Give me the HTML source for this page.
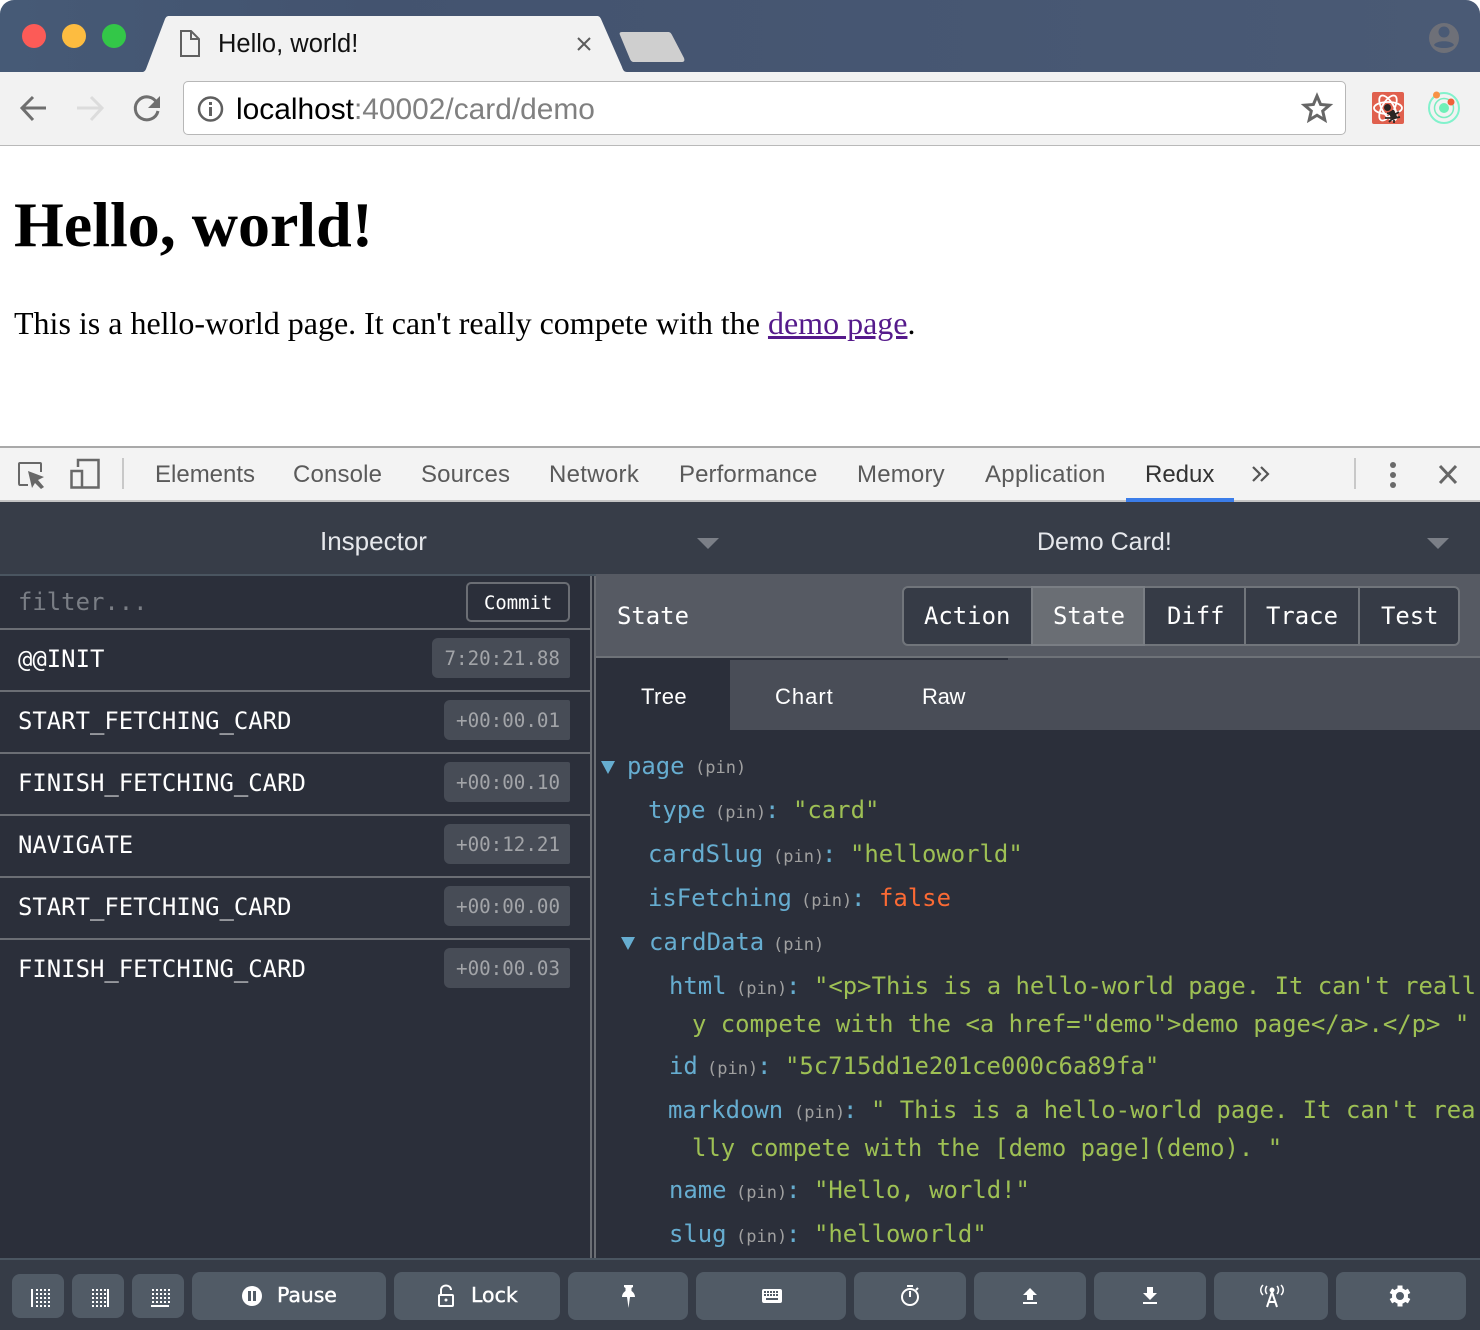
<!DOCTYPE html>
<html><head><meta charset="utf-8"><title>Hello, world!</title>
<style>
html,body{margin:0;padding:0;background:#fff}
#r{position:relative;width:1480px;height:1330px;overflow:hidden;font-family:"Liberation Sans",sans-serif}
.a{position:absolute}
.t{position:absolute;white-space:nowrap;line-height:40px;height:40px}
.m{font-family:"DejaVu Sans Mono","Liberation Mono",monospace;font-size:23.92px}
.dt{font-size:24px;color:#5a5a5a;top:455px;letter-spacing:.15px}
.row{color:#fff;left:18px}
.bd{position:absolute;height:40px;line-height:42px;background:#474c56;border-radius:6px 2px 2px 6px;color:#a2a4a8;font-family:"DejaVu Sans Mono",monospace;font-size:19.2px;text-align:right;padding-right:10px;box-sizing:border-box;width:auto;right:910px}
.ln{position:absolute;left:0;width:590px;height:2px;background:#6b6e74}
.k{color:#66add0}.p{color:#a0a0a0}.s{color:#9ec054}.f{color:#fb6a34}
.b{position:absolute;background:#515b66;border-radius:8px}
.seg{top:596px;color:#fff}
.tb{font-size:22px;color:#fff;top:677px;letter-spacing:.7px}
.fb{font-family:"DejaVu Sans",sans-serif;font-size:20.5px;color:#fff;top:1275px;-webkit-text-stroke:.4px #fff}
.pn{font-size:17px}
</style></head><body><div id="r">
<!-- chrome -->
<div class="a" style="left:0;top:0;width:1480px;height:72px;background:linear-gradient(90deg,#465a76,#43536f 25%,#4a5a75);border-radius:14px 14px 0 0"></div>
<div class="a" style="left:0;top:72px;width:1480px;height:73px;background:#f2f2f2"></div>
<div class="a" style="left:0;top:145px;width:1480px;height:1px;background:#b9b9b9"></div>
<div class="a" style="left:183px;top:81px;width:1161px;height:52px;background:#fff;border:1px solid #b7b7b7;border-radius:5px"></div>
<span class="t" style="left:236px;top:90px;font-size:29.9px;color:#000">localhost<span style="color:#808080">:40002/card/demo</span></span>
<!-- page -->
<div class="a" style="left:14px;top:187px;font:bold 64px/76px 'Liberation Serif',serif;color:#000;white-space:nowrap">Hello, world!</div>
<div class="a" style="left:14px;top:303px;font:32px/40px 'Liberation Serif',serif;color:#000;white-space:nowrap">This is a hello-world page. It can't really compete with the <span style="color:#551a8b;text-decoration:underline">demo page</span>.</div>
<!-- devtools bar -->
<div class="a" style="left:0;top:446px;width:1480px;height:2px;background:#a9a9a9"></div>
<div class="a" style="left:0;top:448px;width:1480px;height:52px;background:#f3f3f3"></div>
<div class="a" style="left:0;top:500px;width:1480px;height:2px;background:#c4c4c4"></div>
<div class="a" style="left:1126px;top:498px;width:108px;height:4px;background:#3b7de9"></div>
<span class="t dt" style="left:155px;letter-spacing:0">Elements</span>
<span class="t dt" style="left:293px">Console</span>
<span class="t dt" style="left:421px">Sources</span>
<span class="t dt" style="left:549px;letter-spacing:.3px">Network</span>
<span class="t dt" style="left:679px;letter-spacing:.1px">Performance</span>
<span class="t dt" style="left:857px;letter-spacing:.2px">Memory</span>
<span class="t dt" style="left:985px;letter-spacing:.3px">Application</span>
<span class="t dt" style="left:1145px;color:#333;letter-spacing:0">Redux</span>
<!-- redux top -->
<div class="a" style="left:0;top:502px;width:1480px;height:72px;background:#373d48"></div>
<div class="a" style="left:0;top:574px;width:596px;height:2px;background:#4a5560"></div>
<span class="t" style="left:320px;top:521px;font-size:26px;color:#e6e8ec">Inspector</span>
<span class="t" style="left:1037px;top:522px;font-size:25px;color:#e6e8ec">Demo Card!</span>
<!-- main -->
<div class="a" style="left:0;top:576px;width:1480px;height:682px;background:#2b2f3a"></div>
<div class="a" style="left:590px;top:576px;width:2px;height:682px;background:#6b6e74"></div>
<div class="a" style="left:594px;top:576px;width:2px;height:682px;background:#6b6e74"></div>
<span class="t m" style="left:18px;top:582px;color:#7a7e85">filter...</span>
<div class="a" style="left:466px;top:582px;width:100px;height:36px;border:2px solid #6b6e74;border-radius:5px"></div>
<span class="t m" style="left:484px;top:583px;color:#fff;font-size:18.9px">Commit</span>
<div class="ln" style="top:628px"></div>
<div class="ln" style="top:690px"></div><div class="ln" style="top:752px"></div><div class="ln" style="top:814px"></div><div class="ln" style="top:876px"></div><div class="ln" style="top:938px"></div>
<span class="t m row" style="top:639px">@@INIT</span>
<span class="t m row" style="top:701px">START_FETCHING_CARD</span>
<span class="t m row" style="top:763px">FINISH_FETCHING_CARD</span>
<span class="t m row" style="top:825px">NAVIGATE</span>
<span class="t m row" style="top:887px">START_FETCHING_CARD</span>
<span class="t m row" style="top:949px">FINISH_FETCHING_CARD</span>
<div class="bd" style="left:432px;top:638px">7:20:21.88</div>
<div class="bd" style="left:444px;top:700px">+00:00.01</div>
<div class="bd" style="left:444px;top:762px">+00:00.10</div>
<div class="bd" style="left:444px;top:824px">+00:12.21</div>
<div class="bd" style="left:444px;top:886px">+00:00.00</div>
<div class="bd" style="left:444px;top:948px">+00:00.03</div>
<!-- right header -->
<div class="a" style="left:596px;top:574px;width:884px;height:82px;background:#565a63"></div>
<div class="a" style="left:596px;top:656px;width:884px;height:2px;background:#6e7278"></div>
<div class="a" style="left:596px;top:658px;width:412px;height:2px;background:#2b2f3a"></div>
<div class="a" style="left:1008px;top:658px;width:472px;height:2px;background:#494d57"></div>
<div class="a" style="left:730px;top:660px;width:750px;height:70px;background:#494d57"></div>
<span class="t m" style="left:617px;top:596px;color:#fff">State</span>
<div class="a" style="left:902px;top:586px;width:554px;height:56px;background:#363b46;border:2px solid #71757b;border-radius:6px"></div>
<div class="a" style="left:1031px;top:586px;width:114px;height:60px;background:#6a6e74;box-sizing:border-box;border:2px solid #7a7e84"></div>
<div class="a" style="left:1244px;top:586px;width:2px;height:60px;background:#71757b"></div>
<div class="a" style="left:1358px;top:586px;width:2px;height:60px;background:#71757b"></div>
<span class="t m seg" style="left:924px">Action</span>
<span class="t m seg" style="left:1053px">State</span>
<span class="t m seg" style="left:1167px">Diff</span>
<span class="t m seg" style="left:1266px">Trace</span>
<span class="t m seg" style="left:1381px">Test</span>
<span class="t tb" style="left:641px;letter-spacing:.4px">Tree</span>
<span class="t tb" style="left:775px;letter-spacing:1px">Chart</span>
<span class="t tb" style="left:922px;letter-spacing:-.3px">Raw</span>
<!-- tree -->
<div>
<span class="t k m" style="left:627px;top:746px">page</span><span class="t p m pn" style="left:695px;top:748px;font-size:17px">(pin)</span>
<span class="t k m" style="left:648px;top:790px">type</span><span class="t p m" style="left:715px;top:793px;font-size:17px">(pin)</span><span class="t k m" style="left:765px;top:790px">:</span><span class="t s m" style="left:793px;top:790px">"card"</span>
<span class="t k m" style="left:648px;top:834px">cardSlug</span><span class="t p m" style="left:773px;top:837px;font-size:17px">(pin)</span><span class="t k m" style="left:822px;top:834px">:</span><span class="t s m" style="left:850px;top:834px">"helloworld"</span>
<span class="t k m" style="left:648px;top:878px">isFetching</span><span class="t p m" style="left:801px;top:881px;font-size:17px">(pin)</span><span class="t k m" style="left:851px;top:878px">:</span><span class="t f m" style="left:879px;top:878px">false</span>
<span class="t k m" style="left:649px;top:922px">cardData</span><span class="t p m" style="left:773px;top:925px;font-size:17px">(pin)</span>
<span class="t k m" style="left:669px;top:966px">html</span><span class="t p m" style="left:736px;top:969px;font-size:17px">(pin)</span><span class="t k m" style="left:786px;top:966px">:</span><span class="t s m" style="left:814px;top:966px">"&lt;p&gt;This is a hello-world page. It can't reall</span>
<span class="t s m" style="left:692px;top:1004px">y compete with the &lt;a href="demo"&gt;demo page&lt;/a&gt;.&lt;/p&gt; "</span>
<span class="t k m" style="left:669px;top:1046px">id</span><span class="t p m" style="left:707px;top:1049px;font-size:17px">(pin)</span><span class="t k m" style="left:757px;top:1046px">:</span><span class="t s m" style="left:785px;top:1046px">"5c715dd1e201ce000c6a89fa"</span>
<span class="t k m" style="left:668px;top:1090px">markdown</span><span class="t p m" style="left:794px;top:1093px;font-size:17px">(pin)</span><span class="t k m" style="left:843px;top:1090px">:</span><span class="t s m" style="left:871px;top:1090px">" This is a hello-world page. It can't rea</span>
<span class="t s m" style="left:692px;top:1128px">lly compete with the [demo page](demo). "</span>
<span class="t k m" style="left:669px;top:1170px">name</span><span class="t p m" style="left:736px;top:1173px;font-size:17px">(pin)</span><span class="t k m" style="left:786px;top:1170px">:</span><span class="t s m" style="left:814px;top:1170px">"Hello, world!"</span>
<span class="t k m" style="left:669px;top:1214px">slug</span><span class="t p m" style="left:736px;top:1217px;font-size:17px">(pin)</span><span class="t k m" style="left:786px;top:1214px">:</span><span class="t s m" style="left:814px;top:1214px">"helloworld"</span>
</div>
<!-- footer -->
<div class="a" style="left:0;top:1258px;width:1480px;height:2px;background:#4a5560"></div>
<div class="a" style="left:0;top:1260px;width:1480px;height:70px;background:#363c47"></div>
<div class="b" style="left:12px;top:1274px;width:52px;height:44px"></div>
<div class="b" style="left:72px;top:1274px;width:52px;height:44px"></div>
<div class="b" style="left:132px;top:1274px;width:52px;height:44px"></div>
<div class="b" style="left:192px;top:1272px;width:194px;height:48px"></div>
<div class="b" style="left:394px;top:1272px;width:166px;height:48px"></div>
<div class="b" style="left:568px;top:1272px;width:120px;height:48px"></div>
<div class="b" style="left:696px;top:1272px;width:150px;height:48px"></div>
<div class="b" style="left:854px;top:1272px;width:112px;height:48px"></div>
<div class="b" style="left:974px;top:1272px;width:112px;height:48px"></div>
<div class="b" style="left:1094px;top:1272px;width:112px;height:48px"></div>
<div class="b" style="left:1214px;top:1272px;width:114px;height:48px"></div>
<div class="b" style="left:1336px;top:1272px;width:130px;height:48px"></div>
<span class="t fb" style="left:277px;letter-spacing:-.1px">Pause</span>
<span class="t fb" style="left:471px">Lock</span>
<!-- icons -->
<svg class="a" style="left:0;top:0" width="1480" height="1330" viewBox="0 0 1480 1330" fill="none">
<defs><pattern id="g" width="4" height="4" patternUnits="userSpaceOnUse" patternTransform="translate(0 1)"><rect width="2" height="2" fill="#fff"/></pattern></defs>
<circle cx="34" cy="36" r="12" fill="#fc5b57"/><circle cx="74" cy="36" r="12" fill="#fdbc40"/><circle cx="114" cy="36" r="12" fill="#33c748"/>
<path d="M142 72C144 72 145 71 146 69L165 19C166 17 167 16 169 16H597C599 16 600 17 601 19L622 67C623 70 624 72 627 72Z" fill="#f2f2f2"/>
<path d="M622 32H668C670 32 671 33 672 35L684 58C685 61 684 62 682 62H634C632 62 631 61 630 59L620 35C619 33 620 32 622 32Z" fill="#cfcfcf"/>
<path d="M181 31H191L199 39V56H181ZM191 31V39H199" stroke="#606060" stroke-width="2"/>
<text x="218" y="52" font-family="Liberation Sans, sans-serif" font-size="25.5" fill="#111">Hello, world!</text>
<path d="M578 38L590 50M590 38L578 50" stroke="#5c5c5c" stroke-width="2"/>
<path d="M46 108H23M33 97L22 108L33 120" stroke="#6f6f6f" stroke-width="3"/>
<path d="M77 108H101M91 97L102 108L91 120" stroke="#dcdcdc" stroke-width="3"/>
<path d="M157 103A11.500 11.500 0 1 0 158 111" stroke="#6f6f6f" stroke-width="3"/><path d="M160 96V108H148Z" fill="#6f6f6f"/>
<circle cx="210.500" cy="109" r="11.500" stroke="#5f5f5f" stroke-width="2.500"/><rect x="209" y="107" width="3" height="9" fill="#5f5f5f"/><rect x="209" y="102" width="3" height="3" fill="#5f5f5f"/>
<path d="M1317 96L1320.600 104.500L1329.500 105.200L1322.700 111L1324.800 120L1317 115.200L1309.200 120L1311.300 111L1304.500 105.200L1313.400 104.500Z" stroke="#666" stroke-width="3"/>
<rect x="1372" y="92" width="32" height="32" rx="2" fill="#e0604e"/>
<g stroke="#fff" stroke-width="1.800"><ellipse cx="1388" cy="108" rx="14" ry="6"/><ellipse cx="1388" cy="108" rx="14" ry="6" transform="rotate(60 1388 108)"/><ellipse cx="1388" cy="108" rx="14" ry="6" transform="rotate(120 1388 108)"/></g>
<circle cx="1387.500" cy="107.500" r="3.500" fill="#2b2523"/><path d="M1391 111L1395 119" stroke="#2b2523" stroke-width="6"/><path d="M1393 110L1392 114M1399 112L1394 115M1400 117L1395 118M1387 113L1392 115M1385 118L1391 118M1389 122L1392 119M1394 123L1394 120" stroke="#2b2523" stroke-width="1.800"/>
<circle cx="1444" cy="108" r="15" stroke="#82f2cc" stroke-width="2"/><circle cx="1444" cy="108" r="9.500" stroke="#7bedc0" stroke-width="1.500"/><circle cx="1444" cy="108" r="5" fill="#6ff0b8"/><circle cx="1436.500" cy="95" r="3.500" fill="#f89245"/><circle cx="1451" cy="102" r="3.500" fill="#f0603a"/>
<circle cx="1444" cy="38" r="15" fill="#6e7078"/><circle cx="1444" cy="32" r="5.500" fill="#4a5a75"/><path d="M1434 45C1436 40 1452 40 1454 45C1451 49 1437 49 1434 45Z" fill="#4a5a75"/>
<path d="M28 485H20C19 485 19 484 19 483V464C19 463 19 463 20 463H40C41 463 41 463 41 464V472" stroke="#686868" stroke-width="2"/><path d="M28 471L44 477L38 480L44 487L41 489L35 483L32 488Z" fill="#686868"/>
<path d="M78 467V460H98.500V487.500H71.500V471H82V487" stroke="#686868" stroke-width="2.500"/>
<rect x="122" y="458" width="2" height="31" fill="#c8c8c8"/><rect x="1354" y="458" width="2" height="31" fill="#c8c8c8"/>
<path d="M1253 467L1260 474L1253 481M1261 467L1268 474L1261 481" stroke="#555" stroke-width="2.200"/>
<circle cx="1393" cy="465" r="3" fill="#6a6a6a"/><circle cx="1393" cy="475" r="3" fill="#6a6a6a"/><circle cx="1393" cy="485" r="3" fill="#6a6a6a"/>
<path d="M1440 466L1456 483M1456 466L1440 483" stroke="#666" stroke-width="3"/>
<path d="M697 538H719L708 549Z M1427 538H1449L1438 549Z" fill="#7b7f87"/>
<path d="M601 761H615L608 774Z M621 937H635L628 950Z" fill="#66add0"/>
<!-- grids -->
<rect x="36" y="1289" width="14" height="18" fill="url(#g)"/><rect x="31" y="1289" width="2" height="18" fill="#fff"/>
<rect x="92" y="1289" width="14" height="18" fill="url(#g)"/><rect x="107" y="1289" width="2" height="18" fill="#fff"/>
<rect x="152" y="1289" width="18" height="14" fill="url(#g)"/><rect x="151" y="1305" width="18" height="2" fill="#fff"/>
<circle cx="252" cy="1296" r="10" fill="#fff"/><rect x="248" y="1291" width="3" height="10" fill="#515b66"/><rect x="253" y="1291" width="3" height="10" fill="#515b66"/>
<rect x="439" y="1295" width="14" height="11" rx="1" stroke="#fff" stroke-width="2"/><path d="M441 1295V1290C441 1284 451 1284 451 1290" stroke="#fff" stroke-width="2"/><circle cx="446" cy="1300" r="1.500" fill="#fff"/>
<path d="M624 1285H633V1287L631.500 1288V1291C633 1292 635 1294 635 1297H622C622 1294 624 1292 625.500 1291V1288L624 1287Z" fill="#fff"/><path d="M627 1297H630L628.500 1308Z" fill="#fff"/>
<rect x="762" y="1289" width="20" height="14" rx="2" fill="#fff"/><g fill="#515b66"><rect x="764" y="1291" width="2" height="2"/><rect x="767" y="1291" width="2" height="2"/><rect x="770" y="1291" width="2" height="2"/><rect x="773" y="1291" width="2" height="2"/><rect x="776" y="1291" width="2" height="2"/><rect x="764" y="1294" width="2" height="2"/><rect x="767" y="1294" width="2" height="2"/><rect x="770" y="1294" width="2" height="2"/><rect x="773" y="1294" width="2" height="2"/><rect x="776" y="1294" width="2" height="2"/><rect x="766" y="1298" width="12" height="2"/></g>
<circle cx="910" cy="1297" r="8" stroke="#fff" stroke-width="2"/><rect x="907" y="1285" width="6" height="2" fill="#fff"/><rect x="909" y="1291" width="2" height="6" fill="#fff"/><path d="M916 1290L918 1288" stroke="#fff" stroke-width="2"/>
<path d="M1030 1288L1037 1295H1033V1300H1027V1295H1023Z" fill="#fff"/><rect x="1023" y="1302" width="14" height="2" fill="#fff"/>
<path d="M1147 1287H1153V1293H1157L1150 1300L1143 1293H1147Z" fill="#fff"/><rect x="1143" y="1302" width="14" height="2" fill="#fff"/>
<circle cx="1272" cy="1290" r="2.500" fill="#fff"/><path d="M1272 1292L1267 1307M1272 1292L1277 1307M1269 1302H1275" stroke="#fff" stroke-width="2"/><path d="M1267 1286C1265 1288 1265 1292 1267 1294M1277 1286C1279 1288 1279 1292 1277 1294M1263 1285C1260 1288 1260 1292 1263 1295M1281 1285C1284 1288 1284 1292 1281 1295" stroke="#fff" stroke-width="1.500"/>
<circle cx="1400" cy="1296" r="6" stroke="#fff" stroke-width="4"/><path d="M1400 1285.500V1290M1400 1302V1306.500M1390.900 1290.800L1394.800 1293M1405.200 1299L1409.100 1301.200M1390.900 1301.200L1394.800 1299M1405.200 1293L1409.100 1290.800" stroke="#fff" stroke-width="5"/>
</svg>
</div></body></html>
